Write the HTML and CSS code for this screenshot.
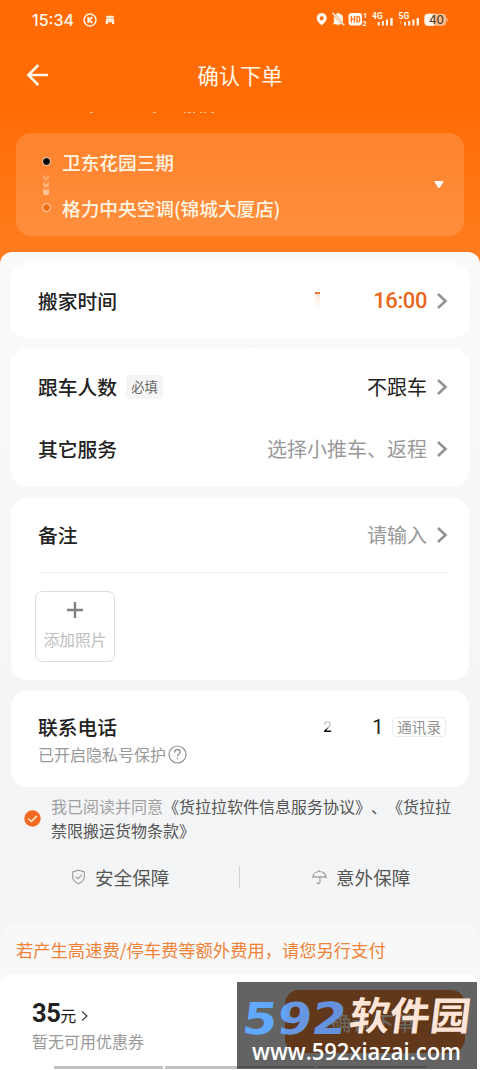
FILE: index.html
```html
<!DOCTYPE html>
<html lang="zh-CN">
	<head>
		<meta charset="utf-8">
		<title>确认下单</title>
		<link rel="stylesheet" href="styles.css">
	</head>
	<body>
		<div class="page">
			<header class="top">
				<div class="status">
					<span class="clock">15:34</span>
					<svg class="status-k" width="14" height="14" viewBox="0 0 14 14" fill="none" stroke="#fff3e4" stroke-width="1.5">
						<circle cx="7" cy="7" r="6"/>
						<path d="M5.3 4v6M9.3 4.1L6 7l3.300 2.900" stroke-width="1.900"/>
					</svg>
					<svg class="status-car" width="10" height="10" viewBox="0 0 10 10" fill="#fff3e4">
						<path d="M1 1.500l1-.7h6l1 .7v1.300H1zM1.800 3.200h6.400l1 1.800v4H7V7.300H3V9H.8V5z"/>
						<path d="M2.500 5.500h1.300M6.200 5.500h1.300" stroke="#ff9c55" stroke-width=".8"/>
					</svg>
					<svg class="status-right" width="134" height="16" viewBox="0 0 134 16" fill="#fff8ee">
						<path fill-rule="evenodd" d="M5.700 1.100a5 5 0 0 1 5 5c0 3.400-3.200 5.700-5 7.500C3.900 11.800.7 9.500.7 6.100a5 5 0 0 1 5-5zm0 3.200a2 2 0 1 0 0 4 2 2 0 0 0 0-4z"/>
						<path d="M19.300 2.300l1.700-.8 1-1 1 1c3 .8 4 2.500 4 5v3.700zM17.800 4l8.200 8.300h-9.300l1.300-2zM20.500 12.500h3l-1.500 1.200z"/>
						<path d="M16.300.8l12 12.500" stroke="#fff8ee" stroke-width="1.300"/>
						<rect x="32.500" y="1" width="13.500" height="12.500" rx="3"/>
						<path d="M35.300 4v6.500M38.500 4v6.500M35.300 7.200h3.200M41 4.600v5.300h1c1.200 0 1.600-.7 1.600-1.500V6c0-.9-.5-1.400-1.600-1.400z" fill="none" stroke="#ff7517" stroke-width="1.300"/>
						<text x="47" y="6" class="tiny">1</text>
						<text x="46.500" y="13.500" class="tiny">2</text>
						<text x="56" y="6.800" class="net">4G</text>
						<path d="M61.700 10h2v3.500h-2zM65.900 9h2v4.500h-2zM70 7.500h2v6h-2zM74.300 6h2.400v7.500h-2.400z"/>
						<text x="82.500" y="6.800" class="net">5G</text>
						<path d="M88 10h2v3.500h-2zM92.200 9h2v4.500h-2zM96.400 7.500h2v6h-2zM100.600 6h2.400v7.500h-2.400z"/>
						<path d="M84.500 9v3" stroke="#ffa562"/>
						<rect x="108.500" y="1.800" width="21.500" height="12" rx="3.500" fill="#ffba8b"/>
						<path d="M112 1.800h6v12h-6a3.500 3.500 0 0 1-3.500-3.500v-5a3.500 3.500 0 0 1 3.500-3.500z"/>
						<path d="M130.500 5.500c1.800.7 1.800 4 0 4.700z" fill="#ffba8b"/>
						<text x="113" y="12" class="battery">40</text>
					</svg>
				</div>

				<div class="titlebar">
					<svg class="back" width="24" height="24" viewBox="0 0 24 24" fill="none" stroke="#fff6e8" stroke-width="2.600">
						<path d="M12.300 2L2.300 12l10 10M2.500 12H22"/>
					</svg>
					<h1>确认下单</h1>
				</div>
				<!-- Top edge of the scrolled text below the title bar -->
				<svg class="scrolled" width="480" height="3" viewBox="0 0 480 3" fill="#ffc38c">
					<path d="M90 0h3v1h-3zM153 0h3v1h-3zM184 0h2v1h-2zM188 0h3v1h-3zM193 0h2v1h-2zM200 0h2v1h-2zM204 0h2v1h-2zM211 0h3v1h-3z"/>
				</svg>

				<section class="route">
					<div class="stops">
						<div class="stop"><i class="dot from"></i>卫东花园三期</div>
						<svg class="arrows" width="6" height="22" viewBox="0 0 6 22" fill="#ffe0c4">
							<path opacity=".35" d="M0 1h1l2 3 2-3h1v4L3 7 0 5z"/>
							<path opacity=".5" d="M0 8l3 2 3-2v4l-3 2-3-2z"/>
							<path opacity=".65" d="M0 14.500l3 1.500 3-1.500v5l-1 1.500H1l-1-1.500z"/>
						</svg>
						<div class="stop"><i class="dot to"></i>格力中央空调(锦城大厦店)</div>
					</div>
					<svg class="drop" width="10" height="8" viewBox="0 0 10 8" fill="#fff">
						<path d="M1.200 0h7.600q1 0 .6 1L6 6.500q-1 1.200-2 0L.6 1q-.4-1 .6-1z"/>
					</svg>
				</section>
			</header>

			<main class="sheet">
				<section class="card time">
					<div class="row">
						<span class="label">搬家时间</span>
						<i class="remnant"></i>
						<span class="value hour">16:00</span>
						<svg class="chev" width="12" height="18" viewBox="0 0 12 18"><path d="M2 2l7.500 7L2 16"/></svg>
					</div>
				</section>

				<section class="card people">
					<div class="row">
						<span class="label">跟车人数</span>
						<span class="tag">必填</span>
						<span class="value">不跟车</span>
						<svg class="chev" width="12" height="18" viewBox="0 0 12 18"><path d="M2 2l7.500 7L2 16"/></svg>
					</div>
					<div class="row">
						<span class="label">其它服务</span>
						<span class="value hint">选择小推车、返程</span>
						<svg class="chev" width="12" height="18" viewBox="0 0 12 18"><path d="M2 2l7.500 7L2 16"/></svg>
					</div>
				</section>

				<section class="card note">
					<div class="row">
						<span class="label">备注</span>
						<span class="value hint">请输入</span>
						<svg class="chev" width="12" height="18" viewBox="0 0 12 18"><path d="M2 2l7.500 7L2 16"/></svg>
					</div>
					<div class="photo">
						<svg width="16" height="16" viewBox="0 0 16 16" stroke="#808080" stroke-width="2.400"><path d="M8 0v16M0 8h16"/></svg>
						<span>添加照片</span>
					</div>
				</section>

				<section class="card phone">
					<div class="row">
						<span class="label">联系电话</span>
						<span class="digit masked">2</span>
						<span class="digit">1</span>
						<span class="contacts">通讯录</span>
					</div>
					<div class="privacy">已开启隐私号保护
						<svg width="19" height="19" viewBox="0 0 19 19" fill="none" stroke="#929292" stroke-width="1.200">
							<circle cx="9.500" cy="9.500" r="8.500"/>
							<path d="M6.800 7.500c0-4 5.400-3.700 5.400-.5 0 2-2.700 2-2.700 4.300M9.500 12.800v1.400" stroke-width="1.400"/>
						</svg>
					</div>
				</section>

				<div class="agree">
					<svg width="17" height="17" viewBox="0 0 17 17" fill="none">
						<circle cx="8.500" cy="8.500" r="8.200" fill="#f36a22"/>
						<path d="M4.300 8.500l3 3 5.500-5.500" stroke="#fff0dd" stroke-width="1.500"/>
					</svg>
					<p><span>我已阅读并同意</span>《货拉拉软件信息服务协议》、《货拉拉<br>禁限搬运货物条款》</p>
				</div>

				<div class="guarantees">
					<div class="guarantee">
						<svg width="15" height="16" viewBox="0 0 15 16" fill="none" stroke="#9b9b9b" stroke-width="1.100">
							<path d="M7.500 1.200L13.300 3v5c0 3.200-2.300 5.200-5.800 6.700C4 13.200 1.700 11.200 1.700 8V3z"/>
							<path d="M4.700 7.600l2.200 2.200 3.800-4"/>
						</svg>
						<span>安全保障</span>
					</div>
					<i class="split"></i>
					<div class="guarantee">
						<svg width="15" height="16" viewBox="0 0 15 16" fill="none" stroke="#9b9b9b" stroke-width="1.100">
							<path d="M7.500 1.200v1.300M1 8.500C1 .5 14 .5 14 8.500c-1.200-1.200-2.600-1.200-3.500 0-.8-1-2-1.200-3 0-1-1.200-2.200-1-3 0-.9-1.200-2.300-1.200-3.500 0zM8 8v5c0 2.200-3 2.200-3 0"/>
						</svg>
						<span>意外保障</span>
					</div>
				</div>
			</main>

			<footer class="bottom">
				<p class="notice">若产生高速费/停车费等额外费用，请您另行支付</p>
				<div class="pay">
					<div class="price"><b>35</b>元
						<svg width="8" height="12" viewBox="0 0 8 12" fill="none" stroke="#444" stroke-width="1.300"><path d="M1 1.500L6 6l-5 4.500"/></svg>
					</div>
					<div class="coupon">暂无可用优惠券</div>
					<div class="navline"><i></i><i></i><i></i></div>
				</div>
			</footer>

			<svg class="watermark" width="240" height="87" viewBox="0 0 240 87">
				<defs>
					<linearGradient id="blue" x1="0" x2="1">
						<stop offset="0" stop-color="#61aaff"/>
						<stop offset=".39" stop-color="#60a6fb"/>
						<stop offset=".43" stop-color="#6898e2"/>
						<stop offset="1" stop-color="#638fdc"/>
					</linearGradient>
				</defs>
				<rect width="240" height="87" fill="#636363"/>
				<rect x="48" y="8" width="180" height="63" rx="14" fill="#613819"/>
				<path d="M0 84h78v2H0zM80 84h110v2H80z" fill="#505050"/>
				<text x="94" y="49" class="order" textLength="84">确认下单</text>
				<text transform="translate(4 51.500) skewX(-7)" class="wm-num" textLength="104" lengthAdjust="spacingAndGlyphs">592</text>
				<text transform="translate(111 48) skewX(-7)" class="wm-name" textLength="121" lengthAdjust="spacingAndGlyphs">软件园</text>
				<text x="15" y="78" class="wm-url" textLength="209" lengthAdjust="spacingAndGlyphs">www.592xiazai.com</text>
			</svg>
		</div>
	</body>
</html>
```

FILE: styles.css
```css
* {
	box-sizing: border-box;
}

body {
	margin: 0;
	font-family: "Noto Sans CJK SC", sans-serif;
	text-spacing-trim: space-all;
	color: #222;
}

h1, p {
	margin: 0;
	font-weight: normal;
}

i {
	display: block;
}

svg {
	display: block;
	flex: none;
}

.page {
	position: relative;
	display: flex;
	flex-direction: column;
	width: 480px;
	height: 1070px;
	overflow: hidden;
	background: linear-gradient(#ff6a03 0, #ff6c06 112px, #ff7e20 265px, #f4f5f6 270px);
}

/* Header */
.top {
	height: 252px;
	flex: none;
}

.status {
	display: flex;
	align-items: center;
	height: 39px;
	padding: 0 30px 0 32px;
	color: #fff8ee;
}

.clock {
	width: 51px;
	font: 500 16px/20px Inter, sans-serif;
}

.status-car {
	margin-left: 8px;
}

.status-right {
	margin-left: auto;
}

.tiny {
	font: bold 7.500px Roboto, sans-serif;
}

.net {
	font: bold 8.500px Roboto, sans-serif;
}

.battery {
	font: 500 11.500px Inter, sans-serif;
	fill: #55402f;
}

.titlebar {
	display: grid;
	grid-template-columns: 80px 1fr 80px;
	align-items: center;
	height: 72px;
}

.back {
	margin-left: 26px;
}

.titlebar h1 {
	font-size: 21.300px;
	line-height: 30px;
	text-align: center;
	color: #fff6e8;
}

.scrolled {
	margin-top: 1px;
}

.route {
	display: flex;
	align-items: center;
	justify-content: space-between;
	height: 103px;
	margin: 18px 16px 0;
	padding: 0 20px 0 26px;
	border-radius: 15px;
	background: rgba(255, 255, 255, .15);
}

.stop {
	display: flex;
	align-items: center;
	gap: 11px;
	height: 24px;
	font-size: 18.670px;
	font-weight: 500;
	line-height: 24px;
	color: #fff5e4;
}

.dot {
	width: 9px;
	height: 9px;
	border: 1px solid #ffe5c8;
	border-radius: 50%;
}

.from {
	background: #000;
}

.to {
	background: #f56b10;
}

.arrows {
	margin-left: 1px;
}

/* Order form */
.sheet {
	height: 673px;
	flex: none;
	padding: 11px 11px 0;
	border-radius: 12px 12px 0 0;
	background: linear-gradient(#fafafa, #f7f7f8 45%, #f3f4f6 90%, #f4f5f5);
}

.card {
	margin-bottom: 11px;
	padding: 0 21px 0 27px;
	border-radius: 16px;
	background: #fff;
}

.row {
	display: flex;
	align-items: center;
	height: 62px;
}

.label {
	font-size: 19.800px;
	font-weight: 500;
	line-height: 30px;
}

.value {
	margin-left: auto;
	margin-right: 9px;
	font-size: 20px;
	line-height: 30px;
}

.hint {
	color: #999;
}

.chev {
	fill: none;
	stroke: #929292;
	stroke-width: 2.600;
}

.time {
	height: 75px;
	margin-bottom: 10px;
}

.time .row {
	height: 75px;
}

.remnant {
	width: 5px;
	height: 17px;
	margin-left: 198px;
	border-top: 2px solid #e9772f;
	background: linear-gradient(#fde9dd, #fff);
}

.hour {
	font: 500 22px/30px Roboto, sans-serif;
	letter-spacing: -.4px;
	color: #e7681c;
}

.people {
	height: 139px;
	padding-top: 8px;
}

.tag {
	margin-left: 9px;
	padding: 0 5px;
	border-radius: 4px;
	background: #f5f5f5;
	font-size: 13.300px;
	line-height: 24px;
	color: #666;
}

.note {
	height: 182px;
	padding-top: 7px;
}

.note .row {
	height: 68px;
	border-bottom: 1px solid #f2f2f2;
}

.note .row > * {
	margin-bottom: 8px;
}

.photo {
	display: flex;
	flex-direction: column;
	align-items: center;
	gap: 10px;
	width: 80px;
	height: 71px;
	margin: 18px 0 0 -3px;
	padding-top: 10px;
	border: 1px solid #dedede;
	border-radius: 7px;
	font-size: 15.700px;
	line-height: 24px;
	color: #bdbdbd;
}

.phone {
	height: 96px;
	margin-bottom: 7px;
	padding-top: 21px;
}

.phone .row {
	height: 30px;
}

.digit {
	width: 20px;
	font: 20px/30px Roboto, sans-serif;
}

.masked {
	width: 49px;
	margin-left: auto;
	font-size: 15px;
	font-weight: 500;
	color: transparent;
	background: linear-gradient(#ccc 50%, #111 60%);
	-webkit-background-clip: text;
	background-clip: text;
}

.contacts {
	margin-right: 2px;
	padding: 0 4px;
	border: 1px solid #ececec;
	border-radius: 4px;
	font-size: 14.600px;
	line-height: 18px;
	color: #929292;
}

.privacy {
	display: flex;
	align-items: center;
	gap: 2px;
	font-size: 16px;
	line-height: 24px;
	color: #999;
}

.agree {
	display: flex;
	align-items: center;
	gap: 10px;
	margin: 0 -11px 0 13px;
	font-size: 16px;
	line-height: 24px;
	color: #555;
	white-space: nowrap;
}

.agree span {
	color: #a0a0a0;
}

.guarantees {
	display: flex;
	align-items: center;
	height: 24px;
	margin: 23px -11px 0 60px;
	color: #555;
}

.guarantee {
	display: flex;
	align-items: center;
	gap: 9px;
	flex: none;
	width: 168px;
	font-size: 18.600px;
	line-height: 24px;
}

.guarantee:last-child {
	width: auto;
}

.split {
	width: 1px;
	height: 22px;
	margin-right: 72px;
	background: #d5d5d5;
}

/* Payment bar */
.bottom {
	height: 145px;
	flex: none;
	border-radius: 14px 14px 0 0;
	background: #f8f8f8;
}

.notice {
	height: 49px;
	padding-left: 16px;
	font-size: 17.300px;
	line-height: 50px;
	color: #f08238;
}

.pay {
	display: flex;
	flex-direction: column;
	height: 96px;
	padding: 23px 0 1px 32px;
	border-radius: 14px 14px 0 0;
	background: #fff;
}

.price {
	display: flex;
	align-items: baseline;
	height: 32px;
	font-size: 16px;
	line-height: 32px;
}

.price b {
	font: bold 25.500px/32px Roboto, sans-serif;
	letter-spacing: -.5px;
}

.price svg {
	margin-left: 5px;
}

.coupon {
	font-size: 16px;
	line-height: 24px;
	color: #999;
}

.navline {
	display: flex;
	gap: 2px;
	margin: auto 0 0 22px;
}

.navline i {
	width: 109px;
	height: 3px;
	background: #c2c2c2;
}

.navline i:nth-child(2) {
	width: 150px;
}

/* Site mark over the payment bar */
.watermark {
	position: absolute;
	left: 237px;
	top: 982px;
}

.order {
	font-size: 20px;
	font-weight: 500;
	fill: #6b665f;
}

.wm-num {
	font: bold 44px "DejaVu Sans", sans-serif;
	fill: url(#blue);
}

.wm-name {
	font-size: 39px;
	font-weight: 700;
	fill: #ffe5d8;
}

.wm-url {
	font: 600 23px "Open Sans", sans-serif;
	fill: #fff;
}
```
